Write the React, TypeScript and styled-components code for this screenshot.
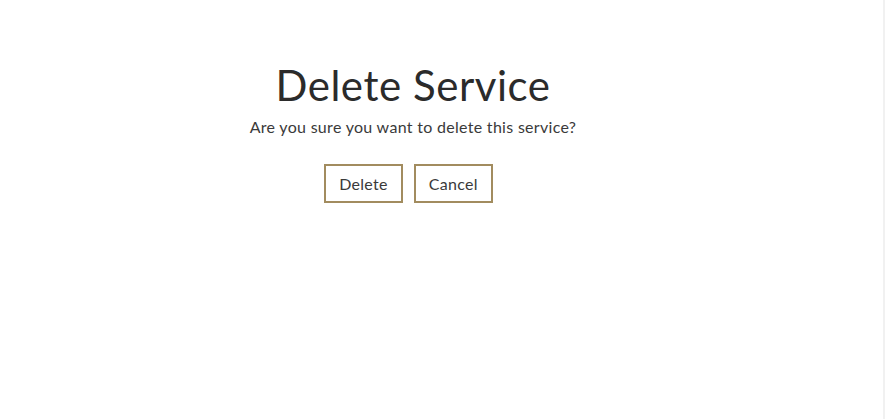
import React from "react";
import styled, { createGlobalStyle } from "styled-components";

const Global = createGlobalStyle`
  html, body { margin: 0; padding: 0; background: #fff; }
  body { font-family: "Lato", "Open Sans", sans-serif; color: #333; }
`;

const Page = styled.div`
  display: flex;
  min-height: 419px;
  box-sizing: border-box;
`;

const Main = styled.main`
  width: 826px;
  display: flex;
  flex-direction: column;
  align-items: center;
  padding-top: 60px;
`;

const Title = styled.h1`
  margin: 0;
  font-size: 42px;
  font-weight: 400;
  line-height: 50px;
  letter-spacing: 0.55px;
  color: #2b2b2b;
`;

const Message = styled.p`
  margin: 5px 0 0;
  font-size: 16px;
  line-height: 24px;
  letter-spacing: 0.3px;
  color: #3a3a3a;
`;

const Actions = styled.div`
  display: flex;
  gap: 11px;
  margin-top: 25px;
  margin-right: 9px;
`;

const Button = styled.button`
  font-family: inherit;
  font-size: 16px;
  letter-spacing: 0.3px;
  color: #3a3a3a;
  background: #fff;
  border: 2px solid #a28c5f;
  height: 39px;
  padding: 0 13px;
  cursor: pointer;
`;

const Edge = styled.div`
  margin-left: auto;
  width: 2px;
  background: #f1f1f1;
`;

export default function App() {
  return (
    <>
      <Global />
      <Page>
        <Main>
          <Title>Delete Service</Title>
          <Message>Are you sure you want to delete this service?</Message>
          <Actions>
            <Button>Delete</Button>
            <Button>Cancel</Button>
          </Actions>
        </Main>
        <Edge />
      </Page>
    </>
  );
}
